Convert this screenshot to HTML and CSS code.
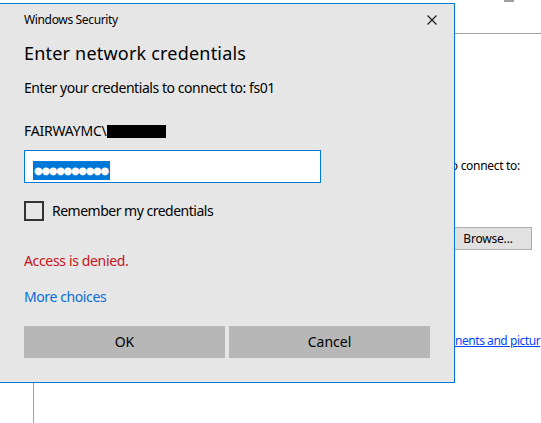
FILE: index.html
```html
<!DOCTYPE html>
<html lang="en">
<head>
<meta charset="utf-8">
<title>Windows Security</title>
<link rel="stylesheet" href="styles.css">
</head>
<body>
<div class="desktop">
  <div class="bg-tab"></div>
  <div class="bg-rule"></div>
  <div class="bg-prompt">Type the address of the folder you want to connect to:</div>
  <div class="bg-browse">Browse...</div>
  <a class="bg-link" href="#">nents and pictur</a>
  <div class="bg-vline"></div>

  <div class="dialog" role="dialog">
    <div class="titlebar">
      <span class="app-name">Windows Security</span>
      <svg class="close" width="10" height="10" viewBox="0 0 10 10"><path d="M0.5 0.5 L9.5 9.5 M9.5 0.5 L0.5 9.5" stroke="#1a1a1a" stroke-width="1.1" fill="none"/></svg>
    </div>
    <h1 class="heading">Enter network credentials</h1>
    <p class="prompt">Enter your credentials to connect to: fs01</p>
    <div class="user">FAIRWAYMC\<span class="redact"></span></div>
    <div class="password"><span class="sel">●●●●●●●●●●</span></div>
    <label class="remember"><span class="box"></span><span>Remember my credentials</span></label>
    <div class="error">Access is denied.</div>
    <a class="more" href="#">More choices</a>
    <div class="buttons">
      <div class="btn">OK</div>
      <div class="btn">Cancel</div>
    </div>
  </div>
</div>
</body>
</html>
```
FILE: styles.css
```css
html, body {
  margin: 0;
  padding: 0;
  background: #ffffff;
  overflow: hidden;
}
.desktop {
  position: relative;
  width: 541px;
  height: 423px;
  overflow: hidden;
  font-family: "Noto Sans", "Open Sans", sans-serif;
  color: #000;
}
.bg-tab {
  position: absolute;
  left: 504px;
  top: 0;
  width: 10px;
  height: 2px;
  background: #a0a0a0;
}
.bg-rule {
  position: absolute;
  left: 455px;
  top: 33px;
  right: 0;
  height: 1px;
  background: #a0a0a0;
}
.bg-prompt {
  position: absolute;
  right: 21px;
  top: 157px;
  font-size: 12px;
  letter-spacing: -0.3px;
  white-space: nowrap;
}
.bg-browse {
  position: absolute;
  left: 444px;
  top: 227px;
  width: 88px;
  height: 23px;
  box-sizing: border-box;
  border: 1px solid #adadad;
  background: #e1e1e1;
  font-size: 12px;
  letter-spacing: -0.2px;
  line-height: 21px;
  text-align: center;
}
.bg-link {
  position: absolute;
  left: 455px;
  top: 332px;
  font-size: 12px;
  letter-spacing: -0.45px;
  color: #0645ff;
  white-space: nowrap;
}
.bg-vline {
  position: absolute;
  left: 33px;
  top: 383px;
  width: 1px;
  bottom: 0;
  background: #a0a0a0;
}
.dialog {
  position: absolute;
  left: -1px;
  top: 3px;
  width: 456px;
  height: 380px;
  box-sizing: border-box;
  border: 1px solid #0078d7;
  background: #e6e6e6;
  padding: 0 24px;
  display: flex;
  flex-direction: column;
}
.titlebar {
  display: flex;
  justify-content: space-between;
  align-items: center;
  margin-top: 8px;
  height: 16px;
}
.app-name {
  font-size: 12px;
  letter-spacing: -0.35px;
  line-height: 16px;
}
.close {
  margin-right: -7px;
}
.heading {
  margin: 12px 0 0;
  font-size: 18px;
  letter-spacing: 0.2px;
  font-weight: normal;
  line-height: 26px;
}
.prompt {
  margin: 12px 0 0;
  font-size: 14px;
  letter-spacing: -0.45px;
  line-height: 20px;
}
.user {
  margin-top: 23px;
  font-size: 14px;
  letter-spacing: -0.2px;
  line-height: 20px;
  display: flex;
  align-items: center;
}
.redact {
  display: inline-block;
  width: 59px;
  height: 13px;
  background: #000;
}
.password {
  margin-top: 9px;
  width: 297px;
  height: 33px;
  box-sizing: border-box;
  border: 1px solid #0078d7;
  background: #fff;
  padding: 6px 0 0 8px;
}
.sel {
  display: inline-block;
  background: #0078d7;
  color: #fff;
  height: 19px;
  font-family: "DejaVu Sans", sans-serif;
  font-size: 10px;
  line-height: 19px;
  letter-spacing: -1.35px;
  padding: 0 2px 0 1px;
  white-space: nowrap;
}
.remember {
  margin-top: 18px;
  display: flex;
  align-items: center;
  gap: 8px;
  font-size: 14px;
  letter-spacing: -0.5px;
  line-height: 20px;
}
.box {
  width: 20px;
  height: 20px;
  box-sizing: border-box;
  border: 2px solid #333;
}
.error {
  margin-top: 30px;
  font-size: 14px;
  letter-spacing: -0.35px;
  line-height: 20px;
  color: #c8121a;
}
.more {
  margin-top: 16px;
  font-size: 14px;
  letter-spacing: -0.4px;
  line-height: 20px;
  color: #0a6fd6;
  text-decoration: none;
  align-self: flex-start;
}
.buttons {
  margin-top: 19px;
  display: flex;
  gap: 4px;
}
.btn {
  flex: 1;
  height: 32px;
  background: #b7b7b7;
  font-size: 14px;
  line-height: 32px;
  text-align: center;
}
```
